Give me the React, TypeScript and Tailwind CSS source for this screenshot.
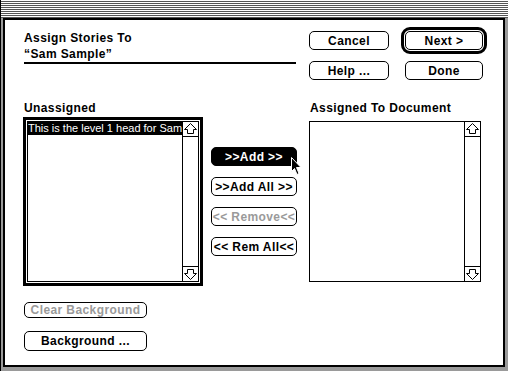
import React from "react";

const LABEL = "text-[12px] font-bold leading-[16px] tracking-[0.4px] whitespace-nowrap";

function Btn({
  children,
  className = "",
}: {
  children: React.ReactNode;
  className?: string;
}) {
  return (
    <div
      className={`flex items-center justify-center border border-black rounded-[5px] text-[12px] font-bold leading-none tracking-[0.4px] whitespace-nowrap ${className}`}
    >
      {children}
    </div>
  );
}

const UpArrow = () => (
  <svg width="15" height="14" viewBox="0 0 15 14">
    <path
      d="M7.5 1.5 L13.5 7.5 L10.5 7.5 L10.5 11.5 L4.5 11.5 L4.5 7.5 L1.5 7.5 Z"
      fill="white"
      stroke="black"
      strokeWidth="1"
    />
  </svg>
);

const DownArrow = () => (
  <svg width="15" height="14" viewBox="0 0 15 14">
    <path
      d="M7.5 12.5 L13.5 6.5 L10.5 6.5 L10.5 2.5 L4.5 2.5 L4.5 6.5 L1.5 6.5 Z"
      fill="white"
      stroke="black"
      strokeWidth="1"
    />
  </svg>
);

function ScrollBar() {
  return (
    <div className="w-[16px] shrink-0 border-l border-black flex flex-col">
      <div className="h-[15px] border-b border-black flex items-center justify-center">
        <UpArrow />
      </div>
      <div className="flex-1" />
      <div className="h-[15px] border-t border-black flex items-center justify-center">
        <DownArrow />
      </div>
    </div>
  );
}

export default function App() {
  return (
    <div className="w-[508px] h-[371px] bg-[#9a9a9a] border-l border-black flex flex-col relative overflow-hidden font-['Liberation_Sans',Arial,sans-serif] text-black">
      <div className="h-[18px] shrink-0 bg-[repeating-linear-gradient(to_bottom,#ffffff_0px,#ffffff_1px,#555555_1px,#555555_2px)]" />
      <div className="flex-1 flex pl-[2px] pr-[3px] pb-[4px] min-h-0">
        <div className="flex-1 bg-white border-2 border-black flex flex-col">
          {/* top section */}
          <div className="flex items-start">
            <div className="ml-[19px] mt-[10px] w-[272px]">
              <div className={LABEL}>Assign Stories To</div>
              <div className={LABEL}>“Sam Sample”</div>
              <div className="h-[2px] bg-black" />
            </div>
            <div className="ml-[13px] mt-[11px] grid grid-cols-[80px_78px] gap-x-[16px] gap-y-[11px]">
              <Btn className="h-[19px]">Cancel</Btn>
              <div className="-m-[4px] border-[3px] border-black rounded-[9px] p-[1px]">
                <Btn className="h-[19px]">Next &gt;</Btn>
              </div>
              <Btn className="h-[19px]">Help ...</Btn>
              <Btn className="h-[19px]">Done</Btn>
            </div>
          </div>

          {/* middle section */}
          <div className="flex items-start mt-[20px]">
            <div className="ml-[18px] w-[180px] flex flex-col">
              <div className={`ml-[1px] ${LABEL}`}>Unassigned</div>
              <div className="mt-[1px] border-[3px] border-black p-[1px]">
                <div className="h-[161px] border border-black flex">
                  <div className="flex-1 min-w-0 overflow-hidden">
                    <div className="h-[13px] bg-black text-white text-[11px] leading-[13px] whitespace-nowrap">
                      This is the level 1 head for Sam
                    </div>
                  </div>
                  <ScrollBar />
                </div>
              </div>
            </div>

            <div className="ml-[8px] w-[86px] mt-[47px] flex flex-col gap-[11px]">
              <Btn className="h-[19px] bg-black text-white">&gt;&gt;Add &gt;&gt;</Btn>
              <Btn className="h-[19px]">&gt;&gt;Add All &gt;&gt;</Btn>
              <Btn className="h-[19px] text-[#9a9a9a]">&lt;&lt; Remove&lt;&lt;</Btn>
              <Btn className="h-[19px]">&lt;&lt; Rem All&lt;&lt;</Btn>
            </div>

            <div className="ml-[12px] w-[172px] flex flex-col">
              <div className={`ml-[1px] ${LABEL}`}>Assigned To Document</div>
              <div className="mt-[5px] h-[161px] border border-black flex">
                <div className="flex-1" />
                <ScrollBar />
              </div>
            </div>
          </div>

          {/* bottom section */}
          <div className="ml-[19px] mt-[16px] w-[123px] flex flex-col">
            <Btn className="h-[16px] text-[#9a9a9a]">Clear Background</Btn>
            <Btn className="h-[20px] mt-[13px]">Background ...</Btn>
          </div>
        </div>
      </div>

      {/* mouse cursor */}
      <svg
        className="absolute left-[289px] top-[156px]"
        width="13"
        height="20"
        viewBox="0 0 13 20"
      >
        <path
          d="M1.5 1.5 L1.5 15.5 L4.5 12.5 L7 18.5 L9 17.5 L6.5 11.5 L11 11.5 Z"
          fill="black"
          stroke="white"
          strokeWidth="1"
        />
      </svg>
    </div>
  );
}
